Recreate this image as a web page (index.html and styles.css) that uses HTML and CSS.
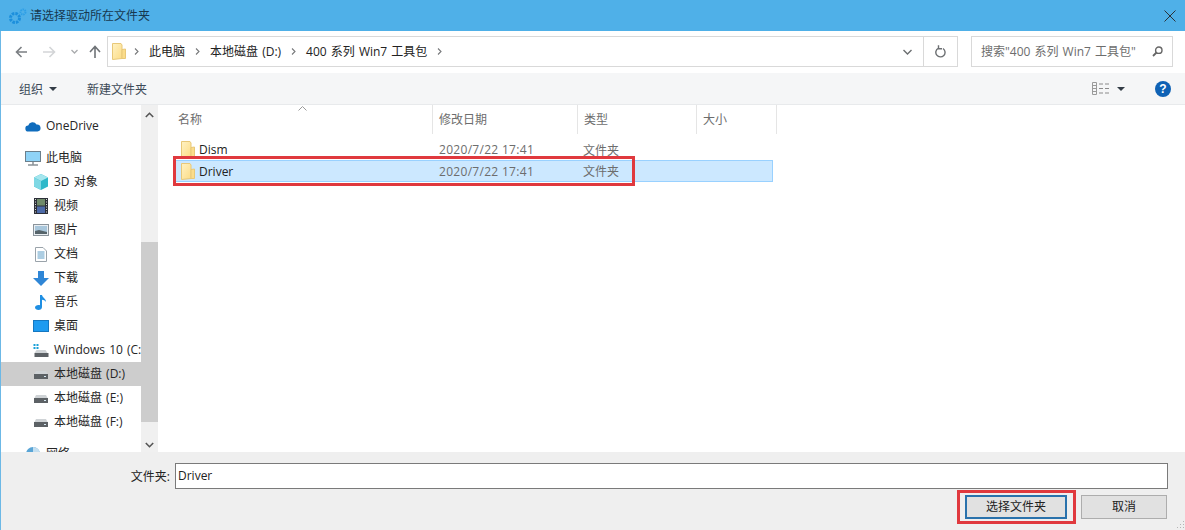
FILE: index.html
```html
<!DOCTYPE html>
<html lang="zh">
<head>
<meta charset="utf-8">
<title>请选择驱动所在文件夹</title>
<link rel="stylesheet" href="styles.css">
</head>
<body>
<svg class="defs" width="0" height="0">
  <defs>
    <linearGradient id="fold" x1="0" y1="0" x2="1" y2="1"><stop offset="0" stop-color="#fff2c4"/><stop offset="1" stop-color="#fcdc85"/></linearGradient>
    <symbol id="folder" viewBox="0 0 14 17">
      <path d="M.5.500h8.500l1 1.500v13.500l-9.500 1z" fill="url(#fold)" stroke="#e8c878"/>
      <path d="M10 6.500l3.500-.5v9.500H10z" fill="#fbdc8a" stroke="#e8c878"/>
    </symbol>
    <symbol id="drive" viewBox="0 0 14 9">
      <path d="M2 1h10l2 4H0z" fill="#cfd3d6"/>
      <rect x="0" y="4" width="14" height="5" fill="#5c6165"/>
      <rect x="10" y="6" width="2" height="1" fill="#d6e8f2"/>
    </symbol>
  </defs>
</svg>
<div class="dialog">
  <header class="titlebar">
    <svg class="title-icon" width="18" height="16" viewBox="0 0 18 16"><circle cx="6" cy="10" r="4.500" fill="none" stroke="#1c8fdc" stroke-width="3" stroke-dasharray="2.500 1"/><circle cx="14" cy="4" r="2.500" fill="none" stroke="#2e9fe6" stroke-width="2" stroke-dasharray="1.500 .7"/></svg>
    <span class="title-text">请选择驱动所在文件夹</span>
    <svg class="close" width="12" height="12" viewBox="0 0 12 12"><path d="M.5.500l11 11M11.500.5l-11 11" stroke="#2b3238" fill="none"/></svg>
  </header>

  <div class="navrow">
    <div class="navbtns">
      <svg class="nav-back" width="12" height="12" viewBox="0 0 12 12"><path d="M12 6H2M6.500 1L1.500 6l5 5" fill="none" stroke="#7b7f83" stroke-width="1.600"/></svg>
      <svg class="nav-fwd" width="13" height="12" viewBox="0 0 13 12"><path d="M0 6h11M6.500 1l5 5-5 5" fill="none" stroke="#d3d5d7" stroke-width="1.600"/></svg>
      <svg class="nav-drop" width="7" height="5" viewBox="0 0 7 5"><path d="M.5 1l3 3 3-3" fill="none" stroke="#a9abad" stroke-width="1.300"/></svg>
      <svg class="nav-up" width="12" height="13" viewBox="0 0 12 13"><path d="M6 13V2M1 7l5-5.500L11 7" fill="none" stroke="#6f7377" stroke-width="1.600"/></svg>
    </div>
    <div class="address">
      <svg class="addr-folder" width="14" height="17"><use href="#folder"/></svg>
      <svg class="crumb-sep first" width="5" height="7" viewBox="0 0 5 7"><path d="M1 .5l3 3-3 3" fill="none" stroke="#77797b" stroke-width="1.100"/></svg>
      <span class="crumb">此电脑</span>
      <svg class="crumb-sep" width="5" height="7" viewBox="0 0 5 7"><path d="M1 .5l3 3-3 3" fill="none" stroke="#77797b" stroke-width="1.100"/></svg>
      <span class="crumb">本地磁盘 (D:)</span>
      <svg class="crumb-sep" width="5" height="7" viewBox="0 0 5 7"><path d="M1 .5l3 3-3 3" fill="none" stroke="#77797b" stroke-width="1.100"/></svg>
      <span class="crumb">400 系列 Win7 工具包</span>
      <svg class="crumb-sep" width="5" height="7" viewBox="0 0 5 7"><path d="M1 .5l3 3-3 3" fill="none" stroke="#77797b" stroke-width="1.100"/></svg>
      <span class="addr-fill"></span>
      <svg class="addr-drop" width="9" height="6" viewBox="0 0 9 6"><path d="M.5 1l4 4 4-4" fill="none" stroke="#6b6e70" stroke-width="1.400"/></svg>
      <span class="refresh">
        <svg width="11" height="13" viewBox="0 0 11 13"><path d="M3.200 3.300A4.600 4.600 0 1 0 8 3.500M3.500 .3V3.800H7" fill="none" stroke="#6c6f72" stroke-width="1.400"/></svg>
      </span>
    </div>
    <div class="search">
      <span class="search-text">搜索"400 系列 Win7 工具包"</span>
      <svg width="11" height="11" viewBox="0 0 11 11"><circle cx="6.800" cy="4.200" r="3.200" fill="none" stroke="#666" stroke-width="1.400"/><path d="M4.500 6.500L1 10" stroke="#666" stroke-width="1.800"/></svg>
    </div>
  </div>

  <div class="toolbar">
    <span class="tool-label">组织</span>
    <span class="caret tool-caret"></span>
    <span class="tool-label new-folder">新建文件夹</span>
    <span class="addr-fill"></span>
    <svg class="views" width="17" height="13" viewBox="0 0 17 13"><path d="M.5.500h4v12h-4zM.5 3.500h4M.5 6.500h4M.5 9.500h4" fill="none" stroke="#9a9a9a"/><path d="M7 2h4M13 2h4M7 6.500h4M13 6.500h4M7 11h4M13 11h4" stroke="#8a8a8a"/></svg>
    <span class="caret views-caret"></span>
    <span class="help">?</span>
  </div>

  <div class="body">
    <nav class="sidebar">
      <div class="side-row top">
        <svg class="side-ic" width="16" height="11" viewBox="0 0 16 11"><path d="M3.500 10.500a3 3 0 0 1-.3-6A4.500 4.500 0 0 1 11.500 3.500a3.500 3.500 0 0 1 1 7z" fill="#0f6cbd"/></svg>
        <span>OneDrive</span>
      </div>
      <div class="side-row group">
        <svg class="side-ic" width="16" height="15" viewBox="0 0 16 15"><rect x=".5" y=".5" width="15" height="10" fill="#8fd3f7" stroke="#6b7f8c"/><path d="M3 14h10M8 11v3" stroke="#8a9298" stroke-width="1.500"/></svg>
        <span>此电脑</span>
      </div>
      <div class="side-row sub">
        <svg class="sub-ic" width="16" height="16" viewBox="0 0 16 16"><path d="M8 0l7 3.500v9L8 16l-7-3.500v-9z" fill="#2fb8c9"/><path d="M8 0l7 3.500L8 7 1 3.500z" fill="#a5e6ee"/><path d="M1 3.500L8 7v9l-7-3.500z" fill="#7fd8e4"/></svg>
        <span>3D 对象</span>
      </div>
      <div class="side-row sub">
        <svg class="sub-ic" width="14" height="16" viewBox="0 0 14 16"><rect width="14" height="16" fill="#2c2f38"/><rect x="3" y="1" width="8" height="6.500" fill="#6f8a6a"/><rect x="3" y="8.500" width="8" height="6.500" fill="#4d6aa8"/><path d="M1 1.500h1M1 4h1M1 6.500h1M1 9h1M1 11.500h1M1 14h1M12 1.500h1M12 4h1M12 6.500h1M12 9h1M12 11.500h1M12 14h1" stroke="#d8d8d8"/></svg>
        <span>视频</span>
      </div>
      <div class="side-row sub">
        <svg class="sub-ic" width="16" height="12" viewBox="0 0 16 12"><rect x=".5" y=".5" width="15" height="11" fill="#e9eef2" stroke="#8b949b"/><rect x="2" y="2" width="12" height="8" fill="#a9c7dc"/><path d="M2 10V7l4-1 8 2v2z" fill="#56646a"/></svg>
        <span>图片</span>
      </div>
      <div class="side-row sub">
        <svg class="sub-ic" width="12" height="15" viewBox="0 0 12 15"><path d="M.5.500h7.500l3.500 3.500v10.500H.5z" fill="#fff" stroke="#9aa3aa"/><path d="M2.500 5h7M2.500 7h7M2.500 9h7M2.500 11h7" stroke="#5a9cc6"/></svg>
        <span>文档</span>
      </div>
      <div class="side-row sub">
        <svg class="sub-ic" width="16" height="15" viewBox="0 0 16 15"><path d="M5 0h6v7h5l-8 8-8-8h5z" fill="#2f86d6"/></svg>
        <span>下载</span>
      </div>
      <div class="side-row sub">
        <svg class="sub-ic" width="12" height="16" viewBox="0 0 12 16"><path d="M5 1h2c.5 3 4 3.500 4 7-1-1.500-2.500-2-4-2.200V13c0 1.700-1.500 3-3.500 3S0 15 0 13.500 1.500 11 3.500 11c.6 0 1 .1 1.500.3z" fill="#1f8fe3"/></svg>
        <span>音乐</span>
      </div>
      <div class="side-row sub">
        <svg class="sub-ic" width="16" height="12" viewBox="0 0 16 12"><rect x=".5" y=".5" width="15" height="11" fill="#1e9bf0" stroke="#1577c0"/></svg>
        <span>桌面</span>
      </div>
      <div class="side-row sub">
        <svg class="sub-ic" width="15" height="13" viewBox="0 0 15 13"><path d="M0 0h2v2H0zM3 0h2v2H3zM0 3h2v2H0zM3 3h2v2H3z" fill="#1aa0d8"/><path d="M3 6h9l2 3H1z" fill="#cfd3d6"/><rect x="1" y="9" width="14" height="4" fill="#5c6165"/></svg>
        <span>Windows 10 (C:)</span>
      </div>
      <div class="side-row sub selected">
        <svg class="sub-ic" width="14" height="9"><use href="#drive"/></svg>
        <span>本地磁盘 (D:)</span>
      </div>
      <div class="side-row sub">
        <svg class="sub-ic" width="14" height="9"><use href="#drive"/></svg>
        <span>本地磁盘 (E:)</span>
      </div>
      <div class="side-row sub">
        <svg class="sub-ic" width="14" height="9"><use href="#drive"/></svg>
        <span>本地磁盘 (F:)</span>
      </div>
      <div class="side-row group net">
        <svg class="side-ic" width="16" height="16" viewBox="0 0 16 16"><circle cx="8" cy="8" r="7" fill="#5aa5d6"/><path d="M8 1a7 7 0 0 1 7 7H8z" fill="#c4dff0"/></svg>
        <span>网络</span>
      </div>
    </nav>
    <div class="scrollbar">
      <svg class="sb-arrow" width="9" height="6" viewBox="0 0 9 6"><path d="M.8 5l3.700-3.700L8.200 5" fill="none" stroke="#555" stroke-width="1.600"/></svg>
      <div class="sb-gap"></div>
      <div class="sb-thumb"></div>
      <svg class="sb-arrow down" width="9" height="6" viewBox="0 0 9 6"><path d="M.8 1l3.700 3.700L8.200 1" fill="none" stroke="#555" stroke-width="1.600"/></svg>
    </div>
    <main class="files">
      <div class="cols">
        <div class="col col-name">名称<svg class="sort" width="9" height="5" viewBox="0 0 9 5"><path d="M.5 4.500l4-4 4 4" fill="none" stroke="#9a9a9a"/></svg></div>
        <div class="col col-date">修改日期</div>
        <div class="col col-type">类型</div>
        <div class="col col-size">大小</div>
      </div>
      <div class="file-row">
        <span class="cell-name"><svg width="14" height="17"><use href="#folder"/></svg>Dism</span>
        <span class="cell-date">2020/7/22 17:41</span>
        <span class="cell-type">文件夹</span>
      </div>
      <div class="file-row current">
        <span class="cell-name"><svg width="14" height="17"><use href="#folder"/></svg>Driver</span>
        <span class="cell-date">2020/7/22 17:41</span>
        <span class="cell-type">文件夹</span>
      </div>
      <div class="mark mark-row"></div>
    </main>
  </div>

  <footer class="footer">
    <div class="name-line">
      <label class="name-label" for="fname">文件夹:</label>
      <input class="name-input" id="fname" value="Driver">
    </div>
    <div class="btn-line">
      <button class="btn primary">选择文件夹<span class="mark mark-btn"></span></button>
      <button class="btn">取消</button>
    </div>
    <svg class="grip" width="10" height="10" viewBox="0 0 10 10"><path d="M8 1h1v1H8zM5 4h1v1H5zM8 4h1v1H8zM2 7h1v1H2zM5 7h1v1H5zM8 7h1v1H8z" fill="#b5b5b5"/></svg>
  </footer>
</div>
</body>
</html>
```
FILE: styles.css
```css
* { box-sizing: border-box; }
html, body { margin: 0; padding: 0; background: #fff; }
body {
  width: 1185px;
  height: 530px;
  overflow: hidden;
  font-family: "Open Sans", "Noto Sans CJK SC", sans-serif;
  font-size: 12px;
  color: #2b2b2b;
}
.defs { position: absolute; }
.dialog {
  width: 1185px;
  height: 530px;
  display: flex;
  flex-direction: column;
  border-left: 1px solid #6cb8e6;
  position: relative;
}
.titlebar {
  height: 31px;
  margin-left: -1px;
  background: #4fb0e8;
  display: flex;
  align-items: center;
  padding: 0 9px 0 9px;
  flex: none;
}
.title-icon { flex: none; }
.title-text { margin-left: 3px; color: #17384f; flex: 1; padding-bottom: 1px; }
.navrow {
  height: 42px;
  flex: none;
  display: flex;
  padding: 5px 11px 6px 0;
  background: #fff;
}
.navbtns {
  width: 106px;
  flex: none;
  display: flex;
  align-items: center;
  padding: 0 0 0 14px;
}
.nav-fwd { margin-left: 16px; }
.nav-drop { margin-left: 15px; }
.nav-up { margin-left: 11px; }
.address {
  width: 851px;
  flex: none;
  border: 1px solid #d9d9d9;
  display: flex;
  align-items: center;
  padding-left: 4px;
  color: #222;
}
.addr-folder { flex: none; }
.crumb-sep { flex: none; margin: 0 10px; }
.crumb-sep.first { margin-left: 8px; }
.crumb { white-space: nowrap; word-spacing: 1px; padding-bottom: 2px; }
.addr-fill { flex: 1; }
.addr-drop { margin-right: 11px; }
.refresh {
  width: 34px;
  height: 100%;
  border-left: 1px solid #d9d9d9;
  display: flex;
  align-items: center;
  justify-content: center;
}
.search {
  width: 202px;
  margin-left: 13px;
  flex: none;
  border: 1px solid #d9d9d9;
  display: flex;
  align-items: center;
  justify-content: space-between;
  padding: 0 9px 0 9px;
  color: #6d6d6d;
  white-space: nowrap;
}
.search-text { word-spacing: 1px; padding-bottom: 2px; }
.toolbar {
  height: 32px;
  flex: none;
  background: #f5f6f7;
  border-bottom: 1px solid #e8eaec;
  display: flex;
  align-items: center;
  padding: 0 14px 0 18px;
  color: #3c4a58;
}
.caret {
  width: 0;
  height: 0;
  border-left: 4px solid transparent;
  border-right: 4px solid transparent;
  border-top: 4px solid #333c46;
}
.tool-caret { margin-left: 6px; }
.new-folder { margin-left: 30px; }
.views-caret { margin-left: 8px; }
.help {
  width: 16px;
  height: 16px;
  margin-left: 30px;
  border-radius: 50%;
  background: #0f62b5;
  color: #fff;
  font: bold 12px/16px "Liberation Sans", sans-serif;
  text-align: center;
}
.body {
  height: 347px;
  flex: none;
  display: flex;
  overflow: hidden;
  background: #fff;
}
.sidebar { width: 140px; flex: none; padding-top: 9px; overflow: hidden; }
.side-row {
  height: 24px;
  display: flex;
  align-items: center;
  white-space: nowrap;
  color: #262626;
  word-spacing: 1px;
}
.side-row span { padding-bottom: 2px; }
.side-row.top, .side-row.group { padding-left: 24px; }
.side-row.group { margin-top: 8px; }
.side-row.sub { padding-left: 32px; overflow: hidden; }
.side-ic { flex: none; margin-right: 5px; width: 16px; }
.sub-ic { flex: none; margin-right: 5px; width: 16px; }
.selected { background: #cdcdcd; }
.scrollbar {
  width: 17px;
  flex: none;
  background: #f0f0f0;
  display: flex;
  flex-direction: column;
  align-items: center;
}
.sb-arrow { flex: none; margin-top: 7px; }
.sb-arrow.down { margin-top: 20px; }
.sb-gap { height: 124px; flex: none; }
.sb-thumb { height: 180px; width: 100%; background: #cdcdcd; flex: none; }
.files { flex: 1; position: relative; padding-left: 1px; }
.cols { height: 29px; display: flex; color: #6d6d6d; }
.col {
  height: 100%;
  display: flex;
  align-items: center;
  padding-left: 6px;
  padding-bottom: 2px;
  border-right: 1px solid #e5e5e5;
  position: relative;
}
.col-name { width: 274px; padding-left: 19px; }
.col-date { width: 145px; }
.col-type { width: 119px; }
.col-size { width: 80px; }
.sort { position: absolute; left: 139px; top: 1px; }
.file-row {
  height: 22px;
  width: 598px;
  margin-left: 16px;
  display: flex;
  align-items: center;
  border: 1px solid transparent;
}
.cols + .file-row { margin-top: 5px; height: 21px; }
.current { background: #cce8ff; border-color: #99d1ff; }
.cell-name { width: 263px; display: flex; align-items: center; gap: 4px; color: #222; padding-left: 5px; }
.cell-date { width: 144px; color: #6d6d6d; letter-spacing: .3px; }
.cell-type { color: #6d6d6d; }
.mark { position: absolute; border: 3px solid #e0393e; pointer-events: none; }
.mark-row { left: 15px; top: 51px; width: 462px; height: 30px; }
.footer {
  flex: 1;
  background: #efefef;
  position: relative;
  padding: 11px 17px 0 0;
}
.name-line { display: flex; align-items: center; justify-content: flex-end; }
.name-label { margin-right: 5px; color: #222; }
.name-input {
  width: 993px;
  height: 26px;
  border: 1px solid #7a7a7a;
  background: #fff;
  padding: 0 2px 2px;
  font: inherit;
  color: #222;
  outline: none;
}
.btn-line { display: flex; justify-content: flex-end; gap: 14px; margin: 6px 1px 0 0; }
.btn {
  width: 86px;
  height: 24px;
  padding: 0 0 2px;
  border: 1px solid #adadad;
  background: #e1e1e1;
  font: inherit;
  color: #222;
  position: relative;
}
.primary { width: 102px; border: 2px solid #2a72ac; }
.mark-btn { left: -10px; top: -7px; width: 119px; height: 34px; }
.grip { position: absolute; right: 0; bottom: 0; }
```
